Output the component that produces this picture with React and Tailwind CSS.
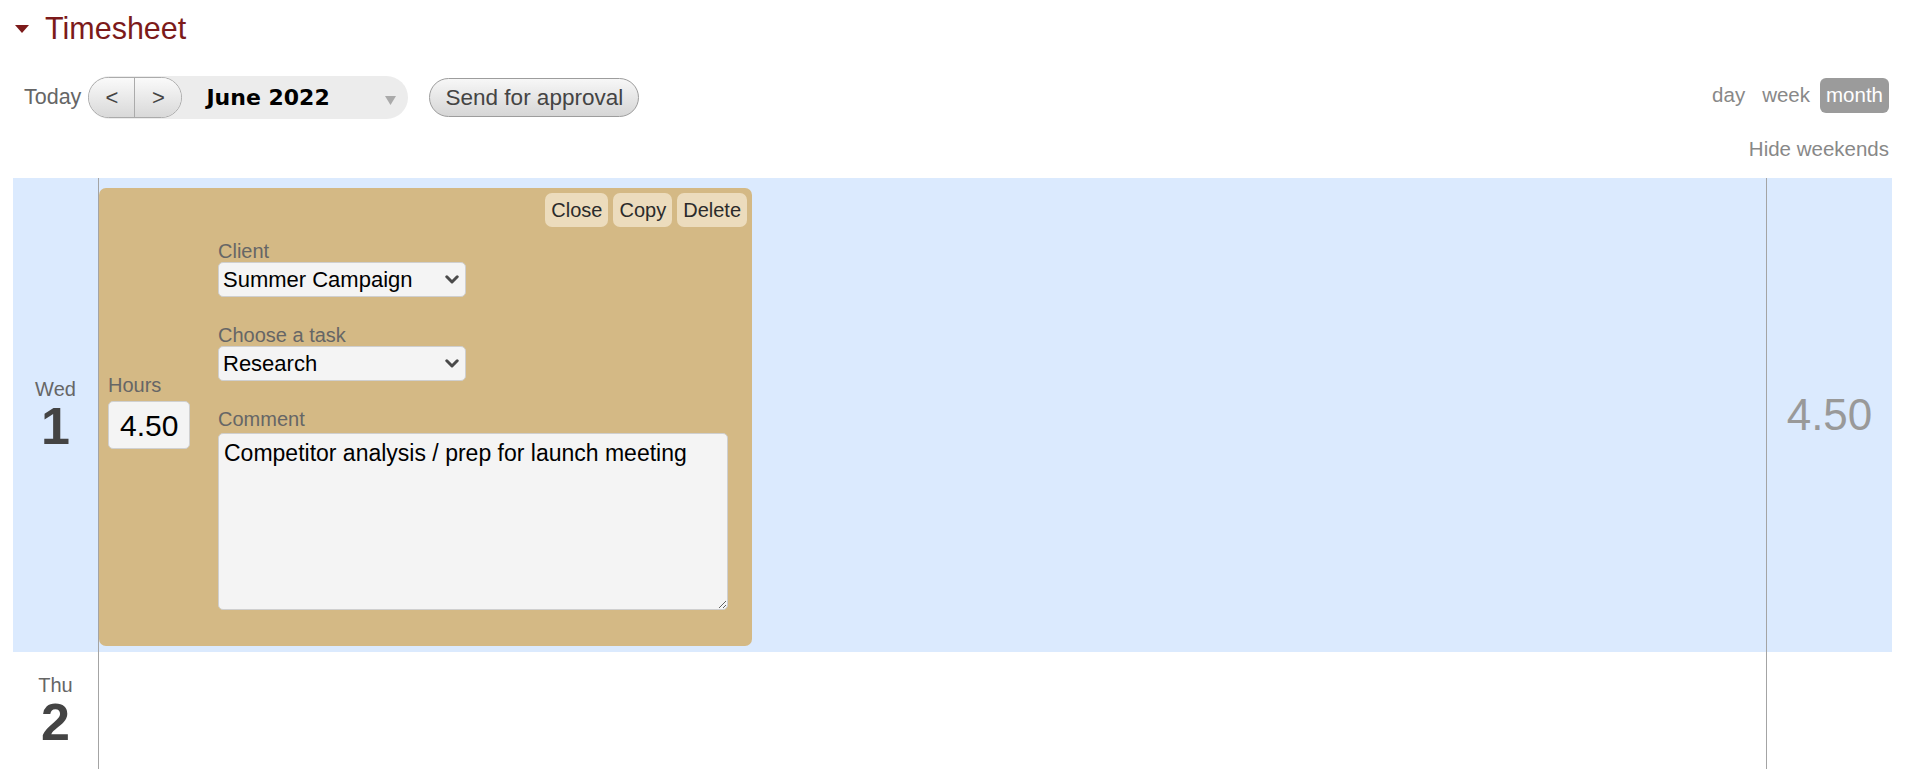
import React from "react";

function Chevron() {
  return (
    <svg
      width="14"
      height="9"
      viewBox="0 0 14 9"
      className="pointer-events-none absolute right-[7px] top-[13px]"
    >
      <path d="M1.8 1.8 L7 7 L12.2 1.8" fill="none" stroke="#4a4a4a" strokeWidth="3" strokeLinecap="round" strokeLinejoin="round" />
    </svg>
  );
}

function SelectBox({ value }) {
  return (
    <div className="relative w-[248px] h-[35px]">
      <select
        defaultValue={value}
        className="appearance-none w-full h-full rounded-[5px] border border-[#cfcfcf] bg-[#f4f4f4] pl-[4px] text-[22px] leading-[33px] text-black font-['Liberation_Sans',Arial,sans-serif] outline-none"
      >
        <option>{value}</option>
      </select>
      <Chevron />
    </div>
  );
}

function DayLabel({ day, num }) {
  return (
    <div className="w-[85px] flex flex-col items-center justify-center">
      <div className="text-[20px] leading-[22px] text-[#666]">{day}</div>
      <div className="text-[52px] leading-[52px] font-bold text-[#444]">{num}</div>
    </div>
  );
}

export default function App() {
  return (
    <div className="w-[1920px] h-[769px] overflow-hidden bg-white pl-[13px] pr-[28px] font-['Liberation_Sans',Arial,sans-serif]">
      {/* Header */}
      <div className="flex items-center h-[30px] mt-[13px] pl-[2px]">
        <svg width="14" height="8" viewBox="0 0 14 8" className="mt-[2px]">
          <polygon points="0,0 14,0 7,8" fill="#7c1a1a" />
        </svg>
        <span className="ml-[16px] text-[30.5px] leading-[30px] text-[#7c1a1a]">Timesheet</span>
      </div>

      {/* Toolbar */}
      <div className="flex justify-between items-start mt-[33px]">
        <div className="flex items-center h-[43px] pl-[11px]">
          <span className="text-[21.5px] text-[#666] mr-[7px]">Today</span>
          <div className="flex items-center h-[43px] w-[320px] rounded-full bg-[#ececec]">
            <div className="flex h-[41px] rounded-full border border-[#ababab] overflow-hidden">
              <div className="w-[46px] flex items-center justify-center bg-gradient-to-b from-[#fafafa] to-[#d9d9d9] border-r border-[#ababab] text-[22px] text-[#444]">&lt;</div>
              <div className="w-[46px] flex items-center justify-center bg-gradient-to-b from-[#fafafa] to-[#d9d9d9] text-[22px] text-[#444]">&gt;</div>
            </div>
            <span className="ml-[24px] font-['DejaVu_Sans',sans-serif] font-bold text-[22px] text-black">June 2022</span>
            <svg width="11" height="9" viewBox="0 0 11 9" className="ml-auto mr-[12px] mt-[6px]">
              <polygon points="0,0 11,0 5.5,9" fill="#aaa" />
            </svg>
          </div>
          <div className="ml-[21px] h-[39px] w-[210px] flex items-center justify-center rounded-full border border-[#9d9d9d] bg-gradient-to-b from-[#f7f7f7] to-[#d6d6d6] text-[22.5px] text-[#444]">
            Send for approval
          </div>
        </div>

        <div className="flex flex-col items-end pt-[2px] pr-[3px]">
          <div className="flex items-center gap-[3px] h-[35px] text-[20.5px]">
            <span className="px-[7px] text-[#888]">day</span>
            <span className="px-[7px] text-[#888]">week</span>
            <span className="px-[6px] h-[35px] flex items-center rounded-[6px] bg-[#9b9b9b] text-white">month</span>
          </div>
          <div className="mt-[25px] text-[20.5px] leading-[22px] text-[#888]">Hide weekends</div>
        </div>
      </div>

      {/* Wed row */}
      <div className="flex h-[474px] mt-[18px] bg-[#dbeafe]">
        <DayLabel day="Wed" num="1" />
        <div className="flex-1 border-l border-[#a4a4a4] pt-[10px]">
          <div className="w-[653px] h-[458px] rounded-[7px] bg-[#d4b985] flex flex-col">
            <div className="flex justify-end gap-[5px] pt-[5px] pr-[5px]">
              <button className="h-[34px] px-[6px] rounded-[7px] bg-[#ecdcbd] text-[20px] text-[#2b2b2b]">Close</button>
              <button className="h-[34px] px-[6px] rounded-[7px] bg-[#ecdcbd] text-[20px] text-[#2b2b2b]">Copy</button>
              <button className="h-[34px] px-[6px] rounded-[7px] bg-[#ecdcbd] text-[20px] text-[#2b2b2b]">Delete</button>
            </div>
            <div className="flex pl-[9px]">
              <div className="w-[110px] mt-[147px] flex flex-col">
                <div className="text-[20px] leading-[22px] text-[#666]">Hours</div>
                <div className="mt-[5px] w-[82px] h-[48px] flex items-center pl-[11px] rounded-[5px] border border-[#d0d0d0] bg-[#f4f4f4] text-[30px] text-black">
                  4.50
                </div>
              </div>
              <div className="mt-[13px] flex flex-col">
                <div className="text-[20px] leading-[22px] text-[#666]">Client</div>
                <SelectBox value="Summer Campaign" />
                <div className="mt-[27px] text-[20px] leading-[22px] text-[#666]">Choose a task</div>
                <SelectBox value="Research" />
                <div className="mt-[27px] text-[20px] leading-[22px] text-[#666]">Comment</div>
                <textarea
                  defaultValue="Competitor analysis / prep for launch meeting"
                  className="mt-[3px] w-[510px] h-[177px] rounded-[5px] border border-[#cfcfcf] bg-[#f4f4f4] pt-[6px] px-[5px] text-[23px] leading-[26px] text-black outline-none font-['Liberation_Sans',Arial,sans-serif]"
                />
              </div>
            </div>
          </div>
        </div>
        <div className="w-[126px] border-l border-[#a4a4a4] flex items-center justify-center text-[44px] text-[#999]">
          4.50
        </div>
      </div>

      {/* Thu row */}
      <div className="flex h-[117px] bg-white">
        <DayLabel day="Thu" num="2" />
        <div className="flex-1 border-l border-[#a4a4a4]" />
        <div className="w-[126px] border-l border-[#a4a4a4]" />
      </div>
    </div>
  );
}
